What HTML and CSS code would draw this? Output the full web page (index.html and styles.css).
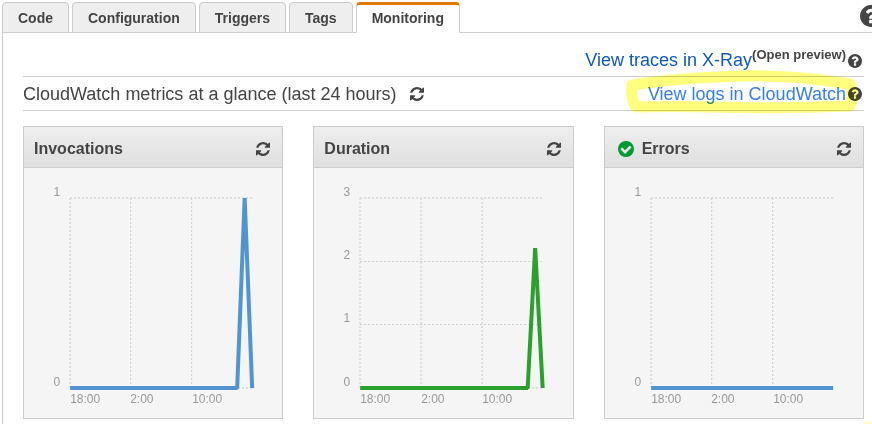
FILE: index.html
```html
<!DOCTYPE html>
<html lang="en">
<head>
<meta charset="utf-8">
<title>Monitoring</title>
<link rel="stylesheet" href="styles.css">
</head>
<body>
<svg class="sprite" aria-hidden="true">
  <symbol id="refresh" viewBox="128 128 1536 1536"><path d="M1639 1056q0 5-1 7-64 268-268 434.5t-478 166.500q-146 0-282.500-55t-243.500-157l-129 129q-19 19-45 19t-45-19-19-45v-448q0-26 19-45t45-19h448q26 0 45 19t19 45-19 45l-137 137q71 66 161 102t187 36q134 0 250-65t186-179q11-17 53-117 8-23 30-23h192q13 0 22.500 9.500t9.500 22.500zm25-800v448q0 26-19 45t-45 19h-448q-26 0-45-19t-19-45 19-45l138-138q-148-137-349-137-134 0-250 65t-186 179q-11 17-53 117-8 23-30 23h-199q-13 0-22.500-9.500t-9.500-22.500v-7q65-268 270-434.500t480-166.500q146 0 284 55.500t245 156.500l130-129q19-19 45-19t45 19 19 45z"/></symbol>
  <symbol id="help" viewBox="128 128 1536 1536"><path d="M1024 1376v-192q0-14-9-23t-23-9h-192q-14 0-23 9t-9 23v192q0 14 9 23t23 9h192q14 0 23-9t9-23zm256-672q0-88-55.500-163t-138.500-116-170-41q-243 0-371 213-15 24 8 42l132 100q7 6 19 6 16 0 25-12 53-68 86-92 34-24 86-24 48 0 85.500 26t37.500 59q0 38-20 61t-68 45q-63 28-115.500 86.500t-52.500 125.500v36q0 14 9 23t23 9h192q14 0 23-9t9-23q0-19 21.500-49.500t54.500-49.500q32-18 49-28.500t46-35 44.500-48 28-60.500 12.500-81zm384 192q0 209-103 385.500t-279.500 279.500-385.500 103-385.500-103-279.500-279.500-103-385.500 103-385.500 279.500-279.500 385.500-103 385.500 103 279.500 279.500 103 385.500z"/></symbol>
  <symbol id="check" viewBox="128 128 1536 1536"><path d="M1412 734q0-28-18-46l-91-90q-19-19-45-19t-45 19l-408 407-226-226q-19-19-45-19t-45 19l-91 90q-18 18-18 46 0 27 18 45l362 362q19 19 45 19 27 0 46-19l543-543q18-18 18-45zm252 162q0 209-103 385.500t-279.500 279.500-385.500 103-385.500-103-279.500-279.500-103-385.500 103-385.500 279.500-279.500 385.500-103 385.500 103 279.500 279.500 103 385.500z"/></symbol>
</svg>

<nav class="tabs">
  <a class="tab" href="#code">Code</a>
  <a class="tab" href="#configuration">Configuration</a>
  <a class="tab" href="#triggers">Triggers</a>
  <a class="tab" href="#tags">Tags</a>
  <a class="tab tab-active" href="#monitoring" aria-current="page">Monitoring</a>
  <button class="icon-button page-help" aria-label="Help"><svg><use href="#help"/></svg></button>
</nav>

<main class="panel">
  <div class="row traces">
    <a class="link" href="#traces">View traces in X-Ray</a><strong class="preview">(Open preview)</strong>
    <button class="icon-button help" aria-label="About traces"><svg><use href="#help"/></svg></button>
  </div>
  <div class="row metrics">
    <h1 class="title">CloudWatch metrics at a glance (last 24 hours)</h1>
    <button class="icon-button refresh" aria-label="Refresh all"><svg><use href="#refresh"/></svg></button>
    <div class="logs">
      <a class="link link-marked" href="#logs">View logs in CloudWatch</a>
      <button class="icon-button help" aria-label="About logs"><svg><use href="#help"/></svg></button>
      <svg class="marker" viewBox="0 0 240 44" aria-hidden="true"><path d="M12 35C8 29 7 20 8 13C40 8 80 5 120 4S190 6 226 12C228 18 229 26 226 34C180 36 130 36 90 35S40 34 17 35"/></svg>
    </div>
  </div>

  <div class="cards">
    <section class="card">
      <header class="card-head">
        <h2 class="card-title">Invocations</h2>
        <button class="icon-button refresh" aria-label="Refresh Invocations"><svg><use href="#refresh"/></svg></button>
      </header>
      <svg class="chart" viewBox="0 0 258 250">
        <path class="edge" d="M46 30H228M46 220H228M46 30V220"/>
        <path class="grid" d="M106.500 30V220M167.500 30V220"/>
        <path class="series blue" d="M46 220H213L220.500 30L228 220"/>
        <text x="36" y="28" class="tick end">1</text>
        <text x="36" y="218" class="tick end">0</text>
        <text x="46" y="235" class="tick">18:00</text>
        <text x="106" y="235" class="tick">2:00</text>
        <text x="168" y="235" class="tick">10:00</text>
      </svg>
    </section>
    <section class="card">
      <header class="card-head">
        <h2 class="card-title">Duration</h2>
        <button class="icon-button refresh" aria-label="Refresh Duration"><svg><use href="#refresh"/></svg></button>
      </header>
      <svg class="chart" viewBox="0 0 258 250">
        <path class="edge" d="M46 30H228M46 220H228M46 30V220M107 30V220M168 30V220"/>
        <path class="grid" d="M46 93.500H228M46 156.500H228"/>
        <path class="series green" d="M46 220H213.500L221 80L228.500 220"/>
        <text x="36" y="28" class="tick end">3</text>
        <text x="36" y="91" class="tick end">2</text>
        <text x="36" y="154" class="tick end">1</text>
        <text x="36" y="218" class="tick end">0</text>
        <text x="46" y="235" class="tick">18:00</text>
        <text x="107" y="235" class="tick">2:00</text>
        <text x="168" y="235" class="tick">10:00</text>
      </svg>
    </section>
    <section class="card">
      <header class="card-head">
        <svg class="status"><use href="#check"/></svg>
        <h2 class="card-title">Errors</h2>
        <button class="icon-button refresh" aria-label="Refresh Errors"><svg><use href="#refresh"/></svg></button>
      </header>
      <svg class="chart" viewBox="0 0 258 250">
        <path class="edge" d="M46 30H228M46 30V220"/>
        <path class="grid" d="M106.500 30V220M167.500 30V220"/>
        <path class="series blue" d="M46 220H228"/>
        <text x="36" y="28" class="tick end">1</text>
        <text x="36" y="218" class="tick end">0</text>
        <text x="46" y="235" class="tick">18:00</text>
        <text x="106" y="235" class="tick">2:00</text>
        <text x="168" y="235" class="tick">10:00</text>
      </svg>
    </section>
  </div>
</main>
</body>
</html>
```
FILE: styles.css
```css
* { box-sizing: border-box; }
html { height: 100%; }
body {
  position: relative;
  margin: 0;
  min-height: 100%;
  padding: 2px 0 0 2px;
  display: flex;
  flex-direction: column;
  overflow: hidden;
  background: #fff;
  color: #444;
  font-family: "Liberation Sans", Arial, sans-serif;
}
/* Stray marker stroke in the page corner */
body::after {
  content: "";
  position: absolute;
  right: 0;
  bottom: 0;
  width: 8px;
  height: 3px;
  border-radius: 4px 0 0 0;
  background: #fffbc4;
}
.sprite { display: none; }
.tabs { display: flex; gap: 3px; position: relative; z-index: 1; }
.tab {
  height: 31px;
  padding: 0 15px;
  border: 1px solid #ccc;
  border-radius: 4px 4px 0 0;
  background: #eee;
  color: #444;
  font-size: 14px;
  font-weight: bold;
  line-height: 30px;
  text-decoration: none;
}
.tab-active {
  border-top: 3px solid #e07700;
  border-bottom-color: #fff;
  background: #fff;
  line-height: 26px;
}
.icon-button {
  flex: none;
  padding: 0;
  border: 0;
  background: none;
  color: #444;
}
.icon-button svg { display: block; width: 100%; height: 100%; fill: currentColor; }
.page-help { width: 22px; height: 22px; margin: 3px -10px 0 auto; }
.help { width: 14px; height: 14px; }
.refresh { width: 14px; height: 14px; }
.panel {
  flex: 1;
  margin-top: -1px;
  padding: 10px 8px 5px 20px;
  border: solid #ccc;
  border-width: 1px 0 0 1px;
}
.row { display: flex; align-items: center; height: 34px; border-bottom: 1px solid #ccc; }
.traces { justify-content: flex-end; padding-right: 2px; }
.traces .help { margin: 2px 0 0 2px; }
.link { color: #1159b8; font-size: 18px; line-height: 22px; text-decoration: none; }
.link-marked { color: #3b80d8; }
.preview { align-self: flex-start; font-size: 13px; line-height: 24px; }
.title { margin: 0; font-size: 18px; font-weight: normal; line-height: 22px; }
.metrics .title { margin-right: 13px; }
.logs { position: relative; display: flex; align-items: center; gap: 2px; margin-left: auto; padding-right: 2px; }
.marker {
  position: absolute;
  right: 0;
  top: -11px;
  width: 240px;
  height: 44px;
  overflow: visible;
  fill: none;
  stroke: #ffff7d;
  stroke-width: 11px;
  stroke-linecap: round;
  stroke-linejoin: round;
  mix-blend-mode: multiply;
  pointer-events: none;
}
.cards { display: grid; grid-template-columns: repeat(3, 1fr); gap: 30px; margin-top: 15px; }
.card { border: 1px solid #ccc; background: #f5f5f5; }
.card-head {
  display: flex;
  align-items: center;
  gap: 8px;
  height: 41px;
  padding: 3px 12px 0 10px;
  border-bottom: 1px solid #ccc;
  background: linear-gradient(#eee, #dfdfdf);
}
.card-head .refresh { margin-left: auto; }
.card-title { margin: 0; font-size: 16px; line-height: 20px; }
.status { width: 16px; height: 16px; margin-left: 3px; fill: #093; }
.chart { display: block; width: 100%; height: 250px; }
.edge { fill: none; stroke: #ddd; stroke-width: 2px; stroke-dasharray: 2 2; }
.grid { fill: none; stroke: #ccc; stroke-width: 1px; stroke-dasharray: 2 2; }
.series { fill: none; stroke-width: 4px; stroke-linejoin: bevel; }
.blue { stroke: #5294cf; }
.green { stroke: #2ca02c; }
.tick { fill: #999; font-size: 12px; }
.end { text-anchor: end; }
```
